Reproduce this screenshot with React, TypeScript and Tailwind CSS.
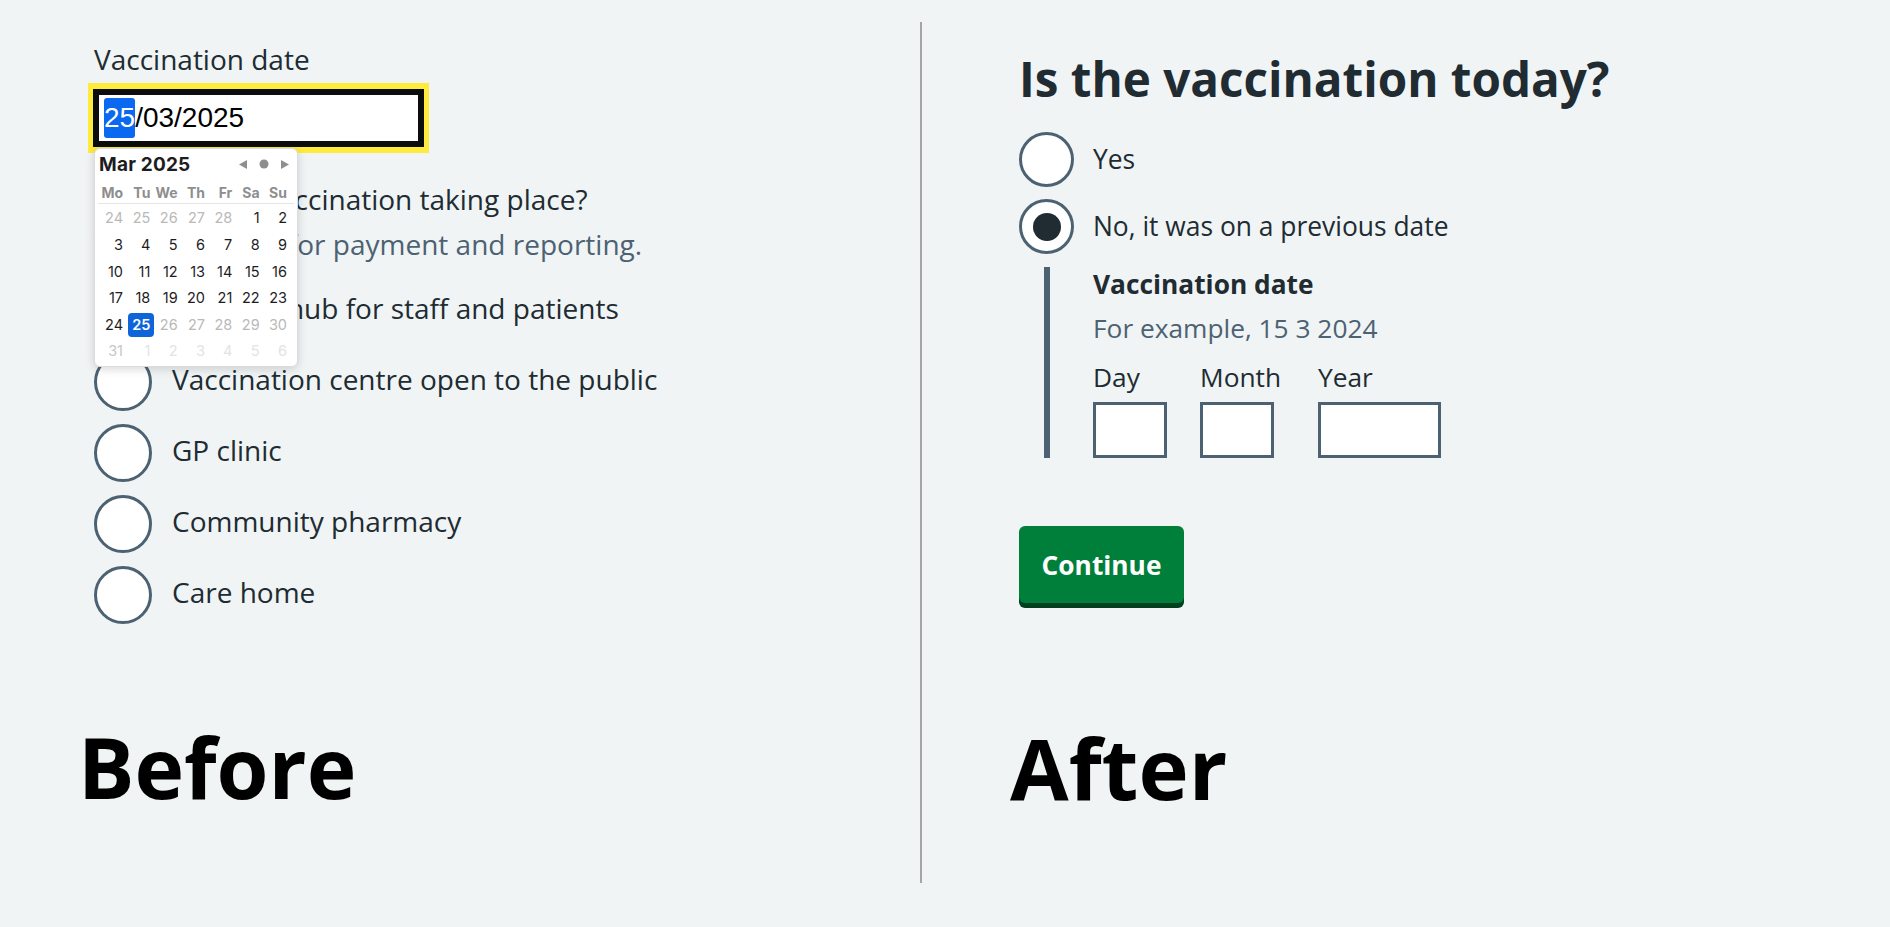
import React from 'react';

type Tone = 'normal' | 'muted' | 'soft' | 'faint' | 'selected';

const toneClass: Record<Tone, string> = {
  normal: 'text-[#1d1d1f]',
  muted: 'text-[#b9b9b9]',
  soft: 'text-[#c6c6c6]',
  faint: 'text-[#e3e3e3]',
  selected: 'bg-[#1064d9] text-white font-semibold rounded-[4px]',
};

const weekdays = ['Mo', 'Tu', 'We', 'Th', 'Fr', 'Sa', 'Su'];

const rows: [number, Tone][][] = [
  [[24, 'muted'], [25, 'muted'], [26, 'muted'], [27, 'muted'], [28, 'muted'], [1, 'normal'], [2, 'normal']],
  [[3, 'normal'], [4, 'normal'], [5, 'normal'], [6, 'normal'], [7, 'normal'], [8, 'normal'], [9, 'normal']],
  [[10, 'normal'], [11, 'normal'], [12, 'normal'], [13, 'normal'], [14, 'normal'], [15, 'normal'], [16, 'normal']],
  [[17, 'normal'], [18, 'normal'], [19, 'normal'], [20, 'normal'], [21, 'normal'], [22, 'normal'], [23, 'normal']],
  [[24, 'normal'], [25, 'selected'], [26, 'muted'], [27, 'muted'], [28, 'muted'], [29, 'muted'], [30, 'muted']],
  [[31, 'soft'], [1, 'faint'], [2, 'faint'], [3, 'faint'], [4, 'faint'], [5, 'faint'], [6, 'faint']],
];

// native date picker that sits over the form
function DatePopup() {
  return (
    <div className="absolute left-[94px] top-[148px] w-[204px] h-[219px] bg-white rounded-[6px] border border-[#dcdcdc] shadow-[0_2px_10px_rgba(0,0,0,0.16)] font-['Inter',sans-serif]">
      <div className="flex items-center justify-between pl-[4px] pr-[8px] pt-[3.5px]">
        <span className="text-[19px] leading-[23px] font-bold text-[#1d1d1f] tracking-[0.2px]">Mar 2025</span>
        <div className="flex items-center gap-[12px]">
          <svg width="8" height="9" viewBox="0 0 8 9"><path d="M8 0 L0 4.5 L8 9 Z" fill="#8e8e8e" /></svg>
          <svg width="10" height="10" viewBox="0 0 10 10"><circle cx="5" cy="5" r="4.5" fill="#8e8e8e" /></svg>
          <svg width="8" height="9" viewBox="0 0 8 9"><path d="M0 0 L8 4.5 L0 9 Z" fill="#8e8e8e" /></svg>
        </div>
      </div>
      <div className="ml-[4.7px] mt-[8px] grid grid-cols-[repeat(7,27.33px)]">
        {weekdays.map((w) => (
          <div key={w} className="flex justify-end h-[17px] items-center">
            <span className="px-[4px] text-[14px] font-bold text-[#8e8e8e]">{w}</span>
          </div>
        ))}
      </div>
      <div className="mx-[3px] mt-[2.5px] h-px bg-[#e6e6e6]" />
      <div className="ml-[4.7px] mt-[1.2px] grid grid-cols-[repeat(7,27.33px)] auto-rows-[26.6px]">
        {rows.flat().map(([d, t], i) => (
          <div key={i} className="flex justify-end items-center">
            <span className={`px-[4px] h-[24px] leading-[24px] text-[14.5px] ${toneClass[t]}`}>{d}</span>
          </div>
        ))}
      </div>
    </div>
  );
}

function LeftRadio({ label }: { label: string }) {
  return (
    <div className="flex items-center h-[58px]">
      <span className="w-[58px] h-[58px] rounded-full border-[3px] border-[#4c6272] bg-white shrink-0" />
      <span className="ml-[20px] pb-[4px] text-[28px] leading-[41px] text-[#212b32]">{label}</span>
    </div>
  );
}

function RightRadio({ label, checked }: { label: string; checked?: boolean }) {
  return (
    <div className="flex items-center h-[55px]">
      <span className="w-[55px] h-[55px] rounded-full border-[3px] border-[#4c6272] bg-white shrink-0 flex items-center justify-center">
        {checked && <span className="w-[28px] h-[28px] rounded-full bg-[#212b32]" />}
      </span>
      <span className="ml-[19px] text-[26.4px] leading-[39px] text-[#212b32]">{label}</span>
    </div>
  );
}

function DateField({ label, boxW, fieldW }: { label: string; boxW: string; fieldW: string }) {
  return (
    <div className={`flex flex-col ${fieldW}`}>
      <span className="text-[26.3px] leading-[38px] text-[#212b32]">{label}</span>
      <span className={`mt-[6px] h-[56px] border-[3px] border-[#4c6272] bg-white ${boxW}`} />
    </div>
  );
}

export default function App() {
  return (
    <div className="w-[1890px] h-[927px] bg-[#f0f4f5] flex font-['Open_Sans',Arial,sans-serif] overflow-hidden">
      {/* before */}
      <div className="relative w-[920px] h-full flex flex-col pl-[94px]">
        <div className="mt-[39px] text-[28px] leading-[41px] text-[#212b32]">Vaccination date</div>
        <div className="mt-[3px] -ml-[6px] w-[341px] h-[70px] bg-[#ffeb3b] px-[5px] py-[6px]">
          <div className="h-full border-[6px] border-[#0b0c0c] bg-white flex items-center pl-[5px] font-['Liberation_Sans',Arial,sans-serif] text-[28px] text-black">
            <span className="bg-[#0b68f0] text-white h-[40px] leading-[40px] rounded-[3px]">25</span>
            <span className="leading-[40px]">/03/2025</span>
          </div>
        </div>
        <div className="mt-[26px] text-[28px] leading-[41px] text-[#212b32]">Where is the vaccination taking place?</div>
        <div className="mt-[4px] text-[28px] leading-[41px] text-[#4c6272]">This is needed for payment and reporting.</div>
        <div className="mt-[16.5px] flex flex-col gap-[13px]">
          <LeftRadio label="Hospital hub for staff and patients" />
          <LeftRadio label="Vaccination centre open to the public" />
          <LeftRadio label="GP clinic" />
          <LeftRadio label="Community pharmacy" />
          <LeftRadio label="Care home" />
        </div>
        <div className="mt-auto mb-[118px] -ml-[16px] text-[84px] leading-[84px] font-bold text-black">Before</div>
        <DatePopup />
      </div>

      <div className="mt-[22px] h-[861px] w-[2px] bg-[#a5a5a5] shrink-0" />

      {/* after */}
      <div className="flex-1 h-full flex flex-col pl-[97px]">
        <h1 className="mt-[49px] text-[47.6px] leading-[59px] font-bold text-[#212b32]">Is the vaccination today?</h1>
        <div className="mt-[24px] flex flex-col gap-[12px]">
          <RightRadio label="Yes" />
          <RightRadio label="No, it was on a previous date" checked />
        </div>
        <div className="mt-[13px] ml-[25px] border-l-[6px] border-[#4c6272] pl-[43px]">
          <div className="-mt-[2px] text-[26.3px] leading-[38px] font-bold text-[#212b32]">Vaccination date</div>
          <div className="mt-[6px] text-[26.3px] leading-[38px] text-[#4c6272]">For example, 15 3 2024</div>
          <div className="mt-[11px] flex gap-[33px]">
            <DateField label="Day" fieldW="w-[74px]" boxW="w-[74px]" />
            <DateField label="Month" fieldW="w-[85px]" boxW="w-[74px]" />
            <DateField label="Year" fieldW="w-[123px]" boxW="w-[123px]" />
          </div>
        </div>
        <button className="mt-[68px] w-[165px] h-[77px] bg-[#007f3b] rounded-[6px] shadow-[0_5px_0_#00401e] text-white text-[26.3px] font-bold leading-[38px]">
          Continue
        </button>
        <div className="mt-auto mb-[118px] -ml-[9px] text-[85px] leading-[84px] font-bold text-black">After</div>
      </div>
    </div>
  );
}
